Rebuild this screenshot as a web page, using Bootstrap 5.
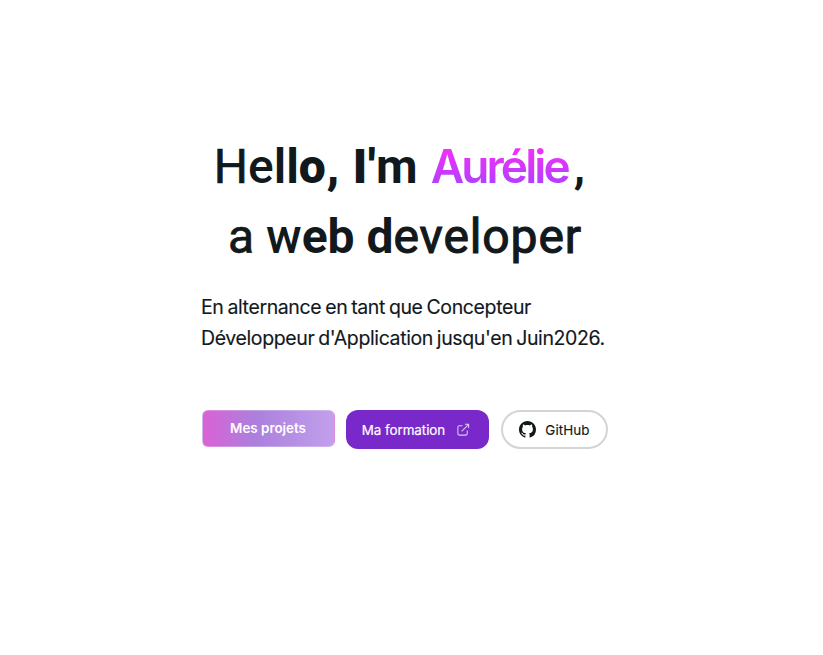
<!DOCTYPE html>
<html lang="fr">
<head>
<meta charset="utf-8">
<meta name="viewport" content="width=device-width, initial-scale=1">
<title>Aurélie – web developer</title>
<link href="https://cdn.jsdelivr.net/npm/bootstrap@5.3.0/dist/css/bootstrap.min.css" rel="stylesheet">
<style>
body{font-family:Inter,"Liberation Sans",sans-serif;color:#11191d;background:#fff}
.hero{width:410px;margin-left:201px;padding-top:130.5px}
.hero-title{font-family:Roboto,"Liberation Sans",sans-serif;font-size:48px;line-height:70px;font-weight:500}
.line-one{padding-left:12.7px}
.line-two{padding-left:27px}
.w4{font-weight:400}.w5{font-weight:500}.w6{font-weight:600}.w7{font-weight:700}.w9{font-weight:900}
.book{-webkit-text-stroke:.7px}
.greet-mid{letter-spacing:.7px}
.tail{letter-spacing:.9px;-webkit-text-stroke:1.1px}
.accent-name{font-family:Inter,sans-serif;font-weight:600;font-size:46px;letter-spacing:-2.9px;margin-left:13px;padding-right:4px;background:linear-gradient(180deg,#ff2df7 15%,#a044ff 90%);-webkit-background-clip:text;background-clip:text;color:transparent}
.comma{margin-left:2px}
.intro{font-size:19.5px;line-height:31px;letter-spacing:-.38px;word-spacing:-1.2px;margin-top:20px;-webkit-text-stroke:.15px}
.actions{margin-top:56.5px;gap:12px}
.actions .btn{font-size:13.4px;line-height:20px;padding:0}
.actions .btn-projects{width:133px;height:37px;margin-left:.5px;margin-right:-.5px;margin-top:.4px;padding-bottom:2px;border:1px solid #ffffff40;border-radius:6px;color:#fff;font-weight:600;background:linear-gradient(90deg,#da62d5,#ab80dd 40%,#c2a0ec)}
.btn-course{width:143px;height:39px;border:0;border-radius:12px;color:#fff;background:#7928ca;letter-spacing:-.05px;-webkit-text-stroke:.2px}
.actions .btn-course{padding-right:2px}
.btn-github{width:107px;height:39px;border:2px solid #d4d4d8;border-radius:20px;color:#11181c;letter-spacing:.1px;-webkit-text-stroke:.15px}
.mark-link{margin-left:11px}
.mark-github{margin-right:9px}
</style>
<script src="https://cdn.jsdelivr.net/npm/bootstrap@5.3.0/dist/js/bootstrap.bundle.min.js"></script>
</head>
<body>
<main class="hero">
<h1 class="hero-title mb-0 text-nowrap">
<span class="line-one d-block"><span class="w4 book">H</span><span class="w5">e</span><span class="w6">l</span><span class="w7">l</span><span class="w9 greet-mid">o, I'</span><span class="w7">m</span><span class="accent-name d-inline-block">Aurélie</span><span class="w6 comma">,</span></span>
<span class="line-two d-block"><span class="w4 book">a </span><span class="w5">w</span><span class="w7">eb d</span><span class="w4 tail">eveloper</span></span>
</h1>
<p class="intro mb-0 text-nowrap">En alternance en tant que Concepteur<br>Développeur d'Application jusqu'en Juin2026.</p>
<div class="actions d-flex align-items-start text-nowrap">
<a class="btn btn-projects d-flex align-items-center justify-content-center" href="#">Mes projets</a>
<a class="btn btn-course d-flex align-items-center justify-content-center" href="#">Ma formation
<svg class="mark-link" width="15" height="15" viewBox="0 0 16 16" fill="none" stroke="#fff" stroke-opacity=".75" stroke-width="1.1"><path d="M7 4H3.5A1.500 1.500 0 0 0 2 5.500V12.500A1.500 1.500 0 0 0 3.500 14H10.500A1.500 1.500 0 0 0 12 12.500V9M6 10L13.500 2.500M9.500 2.500H13.500V6.500"/></svg></a>
<a class="btn btn-github d-flex align-items-center justify-content-center" href="#">
<svg class="mark-github" width="17" height="17" viewBox="0 0 16 16" fill="#11181c"><path d="M8 0C3.580 0 0 3.580 0 8c0 3.540 2.290 6.530 5.470 7.590.4.070.55-.17.55-.38 0-.19-.01-.82-.01-1.490-2.010.37-2.530-.49-2.690-.94-.09-.23-.48-.94-.82-1.130-.28-.15-.68-.52-.01-.53.63-.01 1.080.58 1.230.82.72 1.210 1.870.87 2.330.66.07-.52.28-.87.51-1.070-1.780-.2-3.640-.89-3.640-3.950 0-.87.31-1.590.82-2.150-.08-.2-.36-1.020.08-2.120 0 0 .67-.21 2.200.82.64-.18 1.320-.27 2-.27s1.360.09 2 .27c1.530-1.040 2.200-.82 2.200-.82.44 1.100.16 1.920.08 2.120.51.56.82 1.270.82 2.150 0 3.070-1.870 3.750-3.650 3.950.29.25.54.73.54 1.480 0 1.070-.01 1.930-.01 2.200 0 .21.15.46.55.38A8.010 8.010 0 0 0 16 8c0-4.420-3.580-8-8-8"/></svg>GitHub</a>
</div>
</main>
</body>
</html>
